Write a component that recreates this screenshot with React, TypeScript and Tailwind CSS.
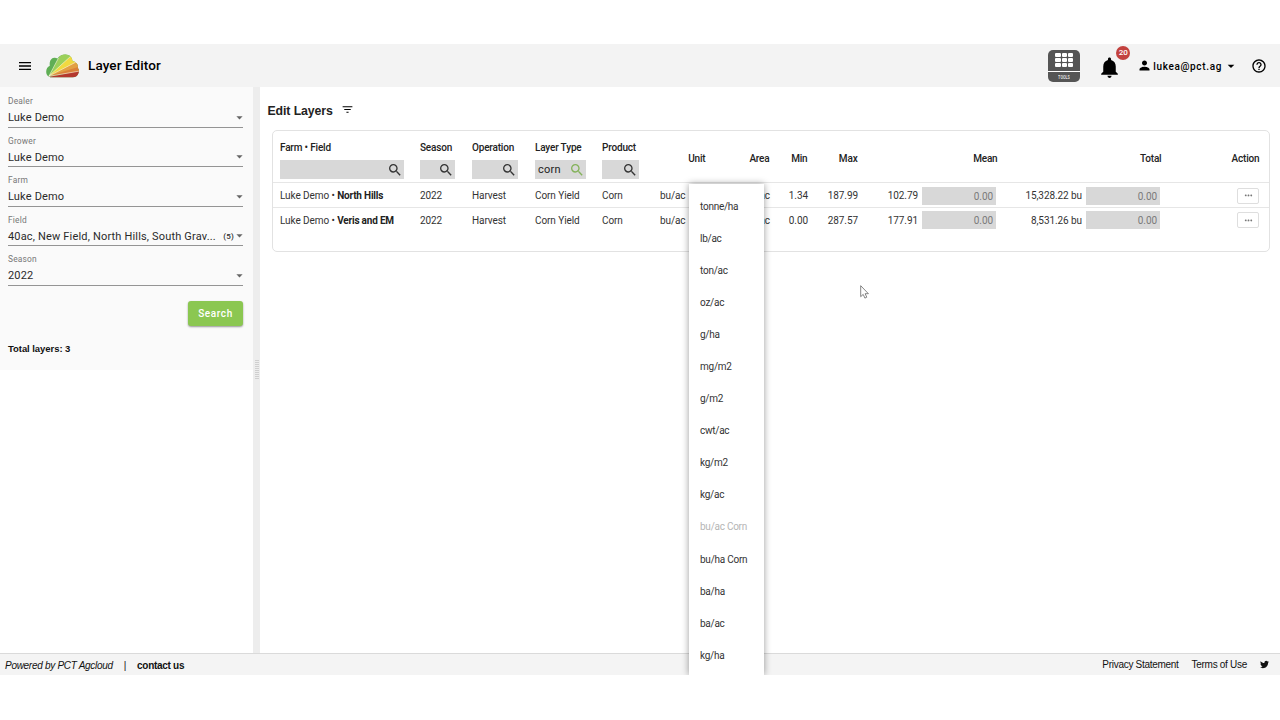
import { clsx } from 'clsx';
import { FaTwitter } from 'react-icons/fa';
import {
  MdArrowDropDown,
  MdFilterList,
  MdHelpOutline,
  MdMenu,
  MdMoreHoriz,
  MdNotifications,
  MdPerson,
  MdSearch,
} from 'react-icons/md';

const filters = [
  { label: 'Dealer', value: 'Luke Demo' },
  { label: 'Grower', value: 'Luke Demo' },
  { label: 'Farm', value: 'Luke Demo' },
  { label: 'Field', value: '40ac, New Field, North Hills, South Grav...', count: 5 },
  { label: 'Season', value: '2022' },
];

const layers = [
  { field: 'North Hills', min: '1.34', max: '187.99', mean: '102.79', total: '15,328.22 bu' },
  { field: 'Veris and EM', min: '0.00', max: '287.57', mean: '177.91', total: '8,531.26 bu' },
];

const units = [
  'tonne/ha', 'lb/ac', 'ton/ac', 'oz/ac', 'g/ha', 'mg/m2', 'g/m2', 'cwt/ac',
  'kg/m2', 'kg/ac', 'bu/ac Corn', 'bu/ha Corn', 'ba/ha', 'ba/ac', 'kg/ha',
];

const columns =
  'grid grid-cols-[140px_52px_63px_67px_58px_46px_64px_38px_50px_140px_164px_98px] pl-[7px]';

function Logo() {
  return (
    <svg width="33" height="24" viewBox="0 0 33 24" className="ml-[13px]">
      <clipPath id="cloud">
        <path d="M5.500 23.300C2.300 23.300.2 21 .2 17.800c0-2.900 1.300-4.900 3.600-6C3.200 7.200 5 4 8.200 3.700c1.200-.1 2.300.1 3.300.7C13.200 1.600 16.200.4 19.200.4c4.500 0 7 2.900 7.300 6.600 3.900.9 6 3.600 5.400 6.900 1.100 1 1.300 2.500.9 4-.6 3.500-2.800 5.400-6.200 5.400z" />
      </clipPath>
      <g clipPath="url(#cloud)">
        <path d="M0 0h33v24H0z" fill="#5fae55" />
        <path d="M3 22L12.500 4l3-4H28v3z" fill="#9bd05a" />
        <path d="M3 22L25.500 1.500l7 3v4z" fill="#f0d940" />
        <path d="M3 22L32 7v10z" fill="#e2a043" />
        <path d="M3 22L34 12.500V18z" fill="#da8139" />
        <path d="M2 23L34 17V24H2z" fill="#b4382e" />
        <path
          d="M3 22L12.500 4M3 22L25.500 1.500M3 22L33 6.500M3 22.300L34 17"
          stroke="#faf6e0"
          strokeWidth="0.6"
        />
      </g>
    </svg>
  );
}

function ToolsButton() {
  return (
    <button className="flex h-8 w-8 flex-col overflow-hidden rounded-[5px] bg-[#555]">
      <span className="flex h-[22px] w-full shrink-0 items-center justify-center border-b border-white">
        <span className="grid grid-cols-3 gap-px">
          {[...Array(9)].map((_, i) => (
            <span key={i} className="h-1 w-[5.300px] rounded-[1px] bg-white" />
          ))}
        </span>
      </span>
      <span className="w-full scale-x-75 text-center text-[5px] leading-[11px] font-bold text-[#ddd]">TOOLS</span>
    </button>
  );
}

function Header() {
  return (
    <header className="flex h-[43px] items-center bg-[#f3f3f3] pl-[17px] text-black">
      <MdMenu className="h-4 w-4" />
      <Logo />
      <h1 className="ml-[9px] text-[13.500px] font-medium tracking-[0.100px]">Layer Editor</h1>
      <div className="ml-auto flex items-center pr-[13px]">
        <ToolsButton />
        <div className="relative ml-[17px]">
          <MdNotifications className="mt-[3px] h-[25px] w-[25px]" />
          <span className="absolute -top-[6px] left-[19px] flex h-[14px] w-[14px] items-center justify-center rounded-full bg-[#c3423f] text-[8px] font-medium text-white">
            20
          </span>
        </div>
        <MdPerson className="ml-[15px] h-[15px] w-[15px]" />
        <span className="ml-px pt-px text-[10px] font-medium tracking-[0.650px]">lukea@pct.ag</span>
        <MdArrowDropDown className="ml-[1px] h-4 w-4" />
        <MdHelpOutline className="ml-[12px] h-4 w-4" />
      </div>
    </header>
  );
}

function Sidebar() {
  return (
    <aside className="w-[253px] shrink-0">
      <div className="h-[283px] bg-[#fafafa] pt-[9px] pr-[10px] pl-2">
        {filters.map((filter) => (
          <div key={filter.label} className="mb-[8px] h-[31.500px] border-b border-[#949494] last-of-type:mb-0">
            <div className="h-[11px] text-[8.400px] leading-[11px] tracking-[0.200px] text-[#777]">{filter.label}</div>
            <div className="flex h-5 items-center text-[11px] tracking-[0.170px] text-[#2a2a2a]">
              <span className="pt-[3px] whitespace-nowrap">{filter.value}</span>
              {filter.count && <span className="mr-[-2px] ml-auto pt-[3px] text-[8px] font-medium">({filter.count})</span>}
              <MdArrowDropDown className={clsx('-mr-[4px] h-[15px] w-[15px] shrink-0 text-[#666]', !filter.count && 'ml-auto')} />
            </div>
          </div>
        ))}
        <button className="mt-[15px] ml-auto block h-[25px] w-[55px] rounded-[3px] bg-[#8bc751] text-[10px] font-medium tracking-[0.600px] text-white shadow-[0_1px_2px_rgba(0,0,0,0.4)]">
          Search
        </button>
        <div className="mt-[17px] font-['Liberation_Sans',Arial,sans-serif] text-[9.500px] leading-[12px] font-bold tracking-[-0.060px] text-[#111]">
          Total layers: 3
        </div>
      </div>
    </aside>
  );
}

function Splitter() {
  return (
    <div className="flex w-[7px] shrink-0 items-center justify-center bg-[#ededed]">
      <div className="flex h-5 w-[4px] flex-col gap-px">
        {[...Array(10)].map((_, i) => (
          <span key={i} className="h-px w-full bg-[#cfcfcf]" />
        ))}
      </div>
    </div>
  );
}

function SearchColumn({ title, width, value }: { title: string; width: string; value?: string }) {
  return (
    <div>
      <div className="mt-[10px] h-[14px] leading-[14px]">{title}</div>
      <div className={clsx('mt-[5px] flex h-[19px] items-center bg-[#d8d8d8] pr-px pl-[2px]', width)}>
        {value && <span className="pt-px pl-px text-[11px] font-normal tracking-[0.250px]">{value}</span>}
        <MdSearch className={clsx('ml-auto h-4 w-4 shrink-0', value ? 'text-[#84b25a]' : 'text-[#333]')} />
      </div>
    </div>
  );
}

function ValueInput() {
  return (
    <span className="flex h-[18px] w-[74px] items-center justify-end bg-[#d8d8d8] pt-px pr-[3px] text-[#7a7a7a]">0.00</span>
  );
}

function LayerTable() {
  return (
    <div className="mt-[11px] ml-3 h-[122px] w-[998px] rounded-[5px] border border-[#e2e2e2] text-[10px] tracking-[-0.080px] whitespace-nowrap text-[#333]">
      <div className={clsx(columns, 'h-[52px] border-b border-[#e6e6e6] font-medium tracking-[-0.180px] text-[#222]')}>
        <SearchColumn title="Farm • Field" width="w-[124px]" />
        <SearchColumn title="Season" width="w-[35px]" />
        <SearchColumn title="Operation" width="w-[46px]" />
        <SearchColumn title="Layer Type" width="w-[51px]" value="corn" />
        <SearchColumn title="Product" width="w-[37px]" />
        {['Unit', 'Area', 'Min', 'Max', 'Mean', 'Total', 'Action'].map((title) => (
          <div key={title} className="mt-[4px] self-center pr-[0.500px] text-right">{title}</div>
        ))}
      </div>
      {layers.map((layer, i) => (
        <div
          key={layer.field}
          className={clsx(columns, 'h-[24.500px] items-center', i === 0 ? 'border-b border-[#e6e6e6] pt-[2px]' : 'pt-px')}
        >
          <div>
            Luke Demo • <b className="font-bold tracking-[-0.200px] text-[#222]">{layer.field}</b>
          </div>
          <div>2022</div>
          <div>Harvest</div>
          <div>Corn Yield</div>
          <div>Corn</div>
          <div>bu/ac</div>
          <div className="text-right">ac</div>
          <div className="text-right">{layer.min}</div>
          <div className="text-right">{layer.max}</div>
          <div className="flex items-center justify-end gap-1 pr-[2px]">
            {layer.mean}
            <ValueInput />
          </div>
          <div className="flex items-center justify-end gap-1 pr-[2px]">
            {layer.total}
            <ValueInput />
          </div>
          <button className="mr-px ml-auto flex h-4 w-[22px] items-center justify-center rounded-[2px] border border-[#dedede] text-[#777]">
            <MdMoreHoriz className="h-[11px] w-[11px]" />
          </button>
        </div>
      ))}
    </div>
  );
}

function UnitMenu() {
  return (
    <ul className="absolute top-[140px] left-[689px] h-[491px] w-[75px] bg-white pt-[6px] text-[10px] tracking-[-0.250px] text-[#333] shadow-[0_0_7px_rgba(0,0,0,0.4)]">
      {units.map((unit) => (
        <li
          key={unit}
          className={clsx('flex h-[32.100px] items-center pl-[11px] whitespace-nowrap', unit === 'bu/ac Corn' && 'text-[#b5b5b5]')}
        >
          {unit}
        </li>
      ))}
    </ul>
  );
}

function Footer() {
  return (
    <footer className="flex h-[22px] items-center border-t border-[#dadada] bg-[#f4f4f4] px-[5px] font-['Liberation_Sans',Arial,sans-serif] text-[10px] tracking-[-0.290px] text-[#111]">
      <span className="pt-px italic">Powered by PCT Agcloud</span>
      <span className="ml-[11px] pt-px">|</span>
      <b className="ml-[11px] pt-px">contact us</b>
      <span className="ml-auto">Privacy Statement</span>
      <span className="ml-[13px]">Terms of Use</span>
      <FaTwitter className="mr-[6px] ml-[13px] h-[9px] w-[9px]" />
    </footer>
  );
}

export default function App() {
  return (
    <div className="h-[720px] w-[1280px] overflow-hidden bg-white pt-11 font-[Roboto,sans-serif]">
      <div className="relative h-[631px] overflow-hidden">
        <Header />
        <div className="flex h-[566px]">
          <Sidebar />
          <Splitter />
          <main className="min-w-0 flex-1">
            <div className="mt-[15px] ml-[7.500px] flex h-[17px] items-center">
              <h2 className="pt-px font-['Liberation_Sans',Arial,sans-serif] text-[12.300px] font-bold tracking-[-0.100px] text-[#222]">Edit Layers</h2>
              <MdFilterList className="mb-[2px] ml-2 h-[13px] w-[13px] text-black" />
            </div>
            <LayerTable />
          </main>
        </div>
        <Footer />
        <UnitMenu />
        {/* Mouse pointer */}
        <svg width="9" height="14" viewBox="0 0 9 14" className="absolute top-[241px] left-[860px]">
          <path d="M.7.7v11l2.500-2.300 1.700 3.700 1.900-.9-1.700-3.500h3.300z" fill="white" stroke="#666" strokeWidth="0.8" />
        </svg>
      </div>
    </div>
  );
}
